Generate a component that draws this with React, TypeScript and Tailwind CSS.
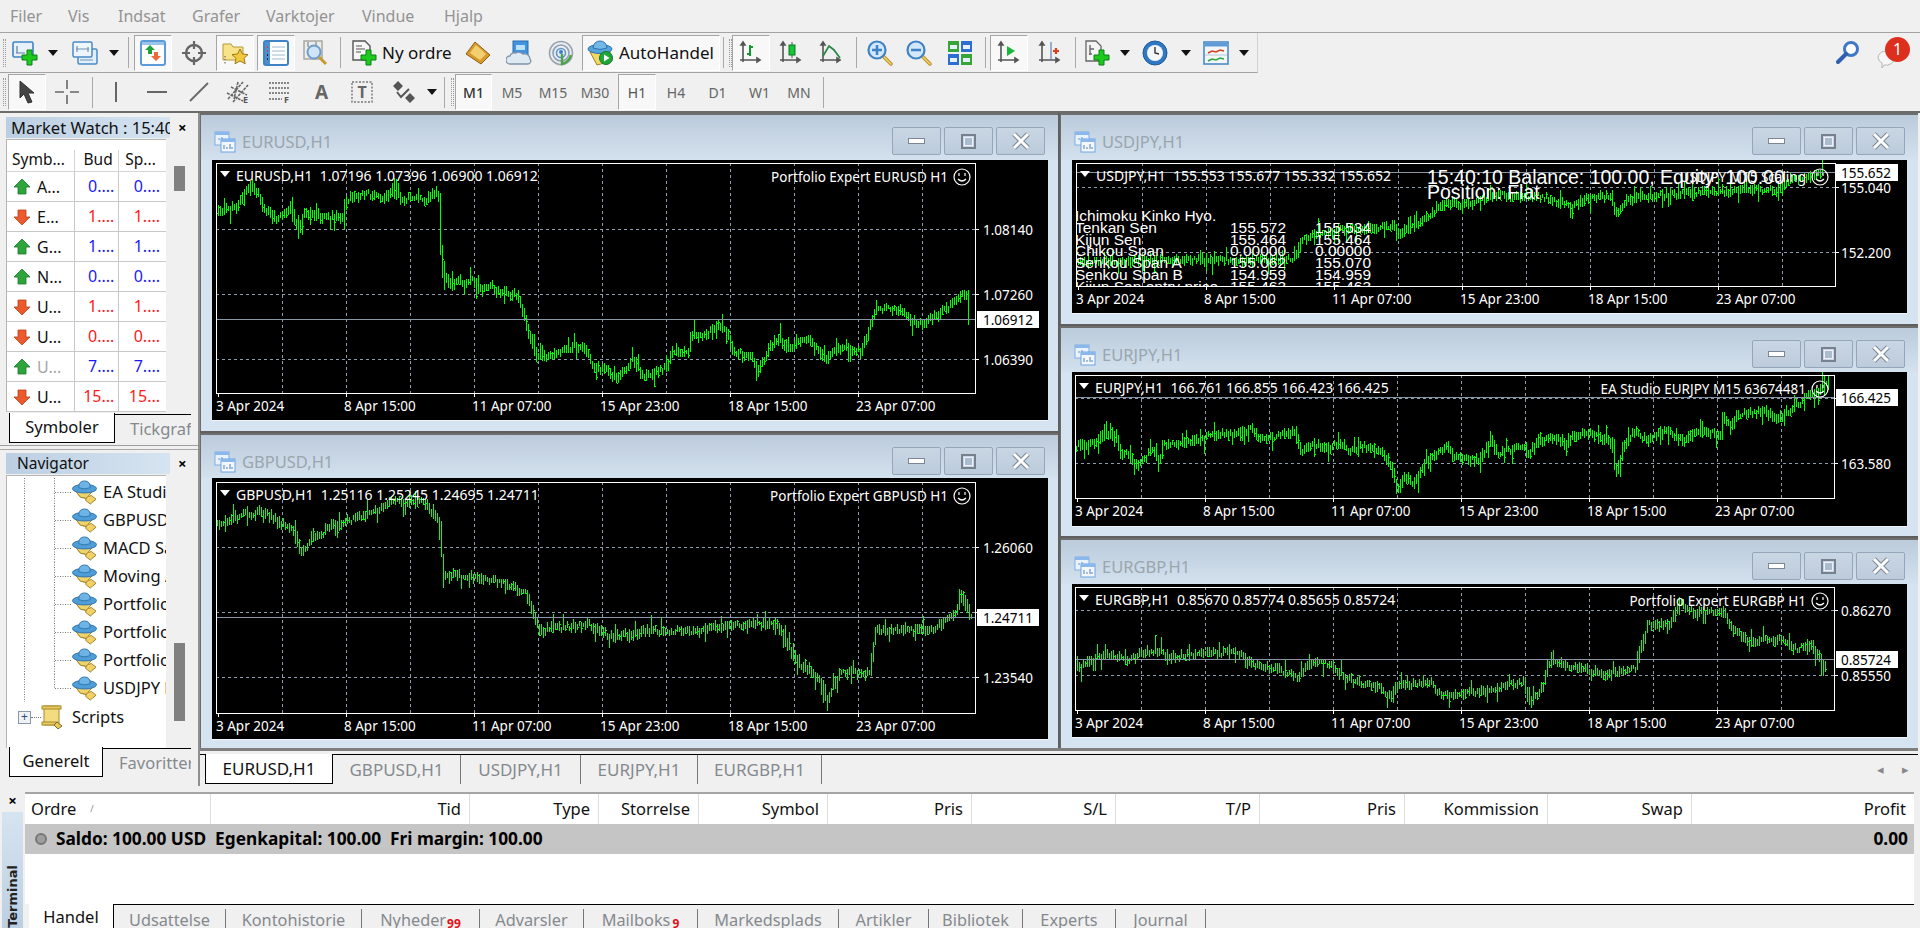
import React from "react";

type P = [number, number];
const conv = (a: number[], ox: number, oy: number, fx: number, fy: number): P[] => {
  const o: P[] = [];
  for (let i = 0; i < a.length; i += 2) o.push([ox + a[i] / fx, oy + a[i + 1] / fy]);
  return o;
};

function barsPath(pts: P[], seed: number) {
  let s = seed;
  const rnd = () => {
    s = (s * 1664525 + 1013904223) % 4294967296;
    return s / 4294967296;
  };
  const at = (x: number) => {
    for (let i = 1; i < pts.length; i++) {
      if (x <= pts[i][0]) {
        const [a, b] = pts[i - 1];
        const [c, d] = pts[i];
        if (c === a) return d;
        return b + ((d - b) * (x - a)) / (c - a);
      }
    }
    return pts[pts.length - 1][1];
  };
  let d = "";
  const end = pts[pts.length - 1][0];
  for (let x = pts[0][0]; x <= end; x += 2) {
    const y = at(x);
    const n = at(x + 2);
    const h = 4 + rnd() * 7;
    const w = (rnd() - 0.5) * 5;
    let top = Math.round(Math.min(y, n) - h / 2 + w);
    let bot = Math.round(Math.max(y, n) + h / 2 + w);
    const k = rnd();
    if (k < 0.07) bot += 8;
    else if (k < 0.14) top -= 8;
    const xi = Math.round(x);
    d += `M${xi + 0.5} ${top}V${bot}`;
    if (rnd() < 0.35) {
      const c = Math.round(top + (bot - top) * rnd());
      d += `M${xi + 1} ${c + 0.5}H${xi + 2}`;
    }
  }
  return d;
}

type ChartSpec = {
  title: string;
  ox: number;
  oy: number;
  w: number;
  h: number;
  pl: number;
  pt: number;
  pr: number;
  pb: number;
  grid: { y: number; label: string }[];
  cur: { y: number; label: string };
  trace: P[];
  legend: string;
  ea: string;
  seed: number;
  digitsLeft: boolean;
  extra?: boolean;
};

const times = ["3 Apr 2024", "8 Apr 15:00", "11 Apr 07:00", "15 Apr 23:00", "18 Apr 15:00", "23 Apr 07:00"];

function Chart({ c }: { c: ChartSpec }) {
  const X = (x: number) => x - c.ox;
  const Y = (y: number) => y - c.oy;
  const pl = X(c.pl), pr = X(c.pr), pt = Y(c.pt), pb = Y(c.pb);
  const vx: number[] = [];
  for (let i = 0; i < 11; i++) vx.push(pl + 65.5 + i * 64);
  const priceX = c.digitsLeft ? 982 : 1840;
  const boxX = c.digitsLeft ? 976 : 1835;
  const clipId = "clip" + c.seed;
  return (
    <svg width={c.w} height={c.h} className="block font-['Noto_Sans',sans-serif]">
      <rect width={c.w} height={c.h} fill="#000" />
      <clipPath id={clipId}>
        <rect x={pl} y={pt} width={pr - pl} height={pb - pt} />
      </clipPath>
      <g stroke="#8f9eae" strokeDasharray="3 3" shapeRendering="crispEdges">
        {vx.map((x) => (
          <line key={x} x1={x + 0.5} x2={x + 0.5} y1={pt} y2={pb} />
        ))}
        {c.grid.map((g) => (
          <line key={g.y} x1={pl} x2={pr} y1={Y(g.y) + 0.5} y2={Y(g.y) + 0.5} />
        ))}
      </g>
      <path d={barsPath(c.trace, c.seed)} transform={`translate(${-c.ox} ${-c.oy})`} stroke="#00ff00" strokeWidth={1} shapeRendering="crispEdges" fill="none" />
      <line x1={pl} x2={pr} y1={Y(c.cur.y) + 0.5} y2={Y(c.cur.y) + 0.5} stroke="#8795a5" shapeRendering="crispEdges" />
      <rect x={pl + 0.5} y={pt + 0.5} width={pr - pl} height={pb - pt} fill="none" stroke="#fff" shapeRendering="crispEdges" />
      <g stroke="#fff" shapeRendering="crispEdges">
        {c.grid.map((g) => (
          <line key={g.y} x1={pr} x2={pr + 4} y1={Y(g.y) + 0.5} y2={Y(g.y) + 0.5} />
        ))}
        {times.map((_, i) => (
          <line key={i} x1={pl + 2 + i * 128 + 0.5} x2={pl + 2 + i * 128 + 0.5} y1={pb} y2={pb + 4} />
        ))}
      </g>
      <polygon points={`${pl + 4},${pt + 8} ${pl + 14},${pt + 8} ${pl + 9},${pt + 14}`} fill="#fff" />
      <g fill="#fff" fontSize="13.5" dominantBaseline="central">
        <text x={pl + 20} y={pt + 12} fontSize="14" className="whitespace-pre" dominantBaseline="central">{c.legend}</text>
        <text x={X(c.digitsLeft ? 947 : 1805)} y={pt + 14} textAnchor="end" dominantBaseline="central">{c.ea}</text>
        {times.map((t, i) => (
          <text key={t} x={pl + i * 128} y={pb + 13} dominantBaseline="central">{t}</text>
        ))}
        {c.grid.filter((g) => g.label).map((g) => (
          <text key={g.y} x={X(priceX)} y={Y(g.y) + 1} dominantBaseline="central">{g.label}</text>
        ))}
      </g>
      <rect x={X(boxX)} y={Y(c.cur.y) - 8} width={62} height={17} fill="#fff" />
      <text x={X(priceX)} y={Y(c.cur.y) + 1} fontSize="13.5" fill="#000" dominantBaseline="central">{c.cur.label}</text>
      <g transform={`translate(${X(c.digitsLeft ? 961 : 1819)} ${pt + 14})`} fill="none" stroke="#fff" strokeWidth="1.2">
        <circle r="8" />
        <path d="M-4 2Q0 6 4 2" />
        <line x1="-3" x2="-3" y1="-4" y2="-1" />
        <line x1="3" x2="3" y1="-4" y2="-1" />
      </g>
      {c.extra && (
        <g fill="#fff" className="font-['Liberation_Sans',sans-serif]">
          <text x={X(1426)} y={Y(177)} fontSize="19.5" dominantBaseline="central">15:40:10 Balance: 100.00, Equity: 100.00</text>
          <text x={X(1426)} y={Y(192)} fontSize="19.5" dominantBaseline="central">Position: Flat</text>
          <g clipPath={`url(#${clipId})`} fontSize="15.5">
            {[
              ["Ichimoku Kinko Hyo.", "", "", 215],
              ["Tenkan Sen", "155.572", "155.534", 227],
              ["Kijun Sen", "155.464", "155.464", 239],
              ["Chikou Span", "0.00000", "0.00000", 250],
              ["Senkou Span A", "155.062", "155.070", 262],
              ["Senkou Span B", "154.959", "154.959", 274],
              ["Kijun Sen entry price", "155.463", "155.463", 286],
            ].map(([a, b, d, y]) => (
              <g key={a as string}>
                <text x={X(1074)} y={Y(y as number)} dominantBaseline="central">{a}</text>
                <text x={X(1285)} y={Y(y as number)} textAnchor="end" dominantBaseline="central">{b}</text>
                <text x={X(1370)} y={Y(y as number)} textAnchor="end" dominantBaseline="central">{d}</text>
              </g>
            ))}
          </g>
        </g>
      )}
    </svg>
  );
}

function TitleIcon() {
  return (
    <svg width="22" height="22" viewBox="0 0 22 22" className="shrink-0">
      <rect x="1" y="1" width="14" height="13" fill="#eaf2fb" stroke="#7fb0e6" />
      <rect x="1" y="1" width="14" height="3" fill="#8ab8ec" />
      <path d="M4 8h2M8 6v5M11 8v3" stroke="#6b93c4" />
      <rect x="7" y="8" width="14" height="13" fill="#f4f8fd" stroke="#6aa4e4" />
      <rect x="7" y="8" width="14" height="3" fill="#8ab8ec" />
      <path d="M10 14v4M13 16v2M16 13v5M18 16v2" stroke="#4e7fb8" />
    </svg>
  );
}

const wbtn = "w-[49px] h-[28px] rounded-[2px] border border-[#95a6b8] bg-[linear-gradient(#c9d6e4,#bccbdb)] flex items-center justify-center";

function ChartWindow({ c, cls, head }: { c: ChartSpec; cls: string; head: string }) {
  return (
    <div className={`${cls} flex flex-col border-t-2 border-l border-[#6d6d6d] bg-[#d6e4f1]`}>
      <div className={`${head} shrink-0 flex justify-between pl-[13px] pr-[13px] pt-[12px] bg-[linear-gradient(#bccbdb,#d3e1ee)]`}>
        <div className="flex items-center h-[28px] gap-[6px] mt-[1px]">
          <TitleIcon />
          <span className="text-[16.5px] text-[#9aa5ae]">{c.title}</span>
        </div>
        <div className="flex gap-[3px]">
          <div className={wbtn}>
            <div className="w-[17px] h-[6px] bg-white border border-[#7c8794]" />
          </div>
          <div className={wbtn}>
            <div className="w-[15px] h-[15px] border-[2px] border-[#77818d] bg-[#c9d6e4] flex items-center justify-center">
              <div className="w-[9px] h-[9px] border border-[#eef] bg-[#aabccd]" />
            </div>
          </div>
          <div className={wbtn}>
            <svg width="20" height="20" viewBox="0 0 20 20">
              <path d="M3 3l14 14M17 3L3 17" stroke="#7c8794" strokeWidth="5" />
              <path d="M3 3l14 14M17 3L3 17" stroke="#fff" strokeWidth="3" />
            </svg>
          </div>
        </div>
      </div>
      <div className="pl-[11px]">
        <div className="border-b border-[#eef4fa] w-fit">
          <Chart c={c} />
        </div>
      </div>
    </div>
  );
}

const eurusd: ChartSpec = {
  title: "EURUSD,H1", ox: 211, oy: 160, w: 836, h: 260, pl: 215, pt: 163, pr: 974, pb: 393,
  grid: [{ y: 229, label: "1.08140" }, { y: 294, label: "1.07260" }, { y: 359, label: "1.06390" }],
  cur: { y: 319, label: "1.06912" },
  trace: conv([37,280,78,260,100,195,120,230,125,270,150,295,175,265,190,340,200,275,230,290,270,290,275,240,310,220,350,235,365,190,375,235,420,240,445,212,448,370,455,470,465,500,480,485,510,480,520,510,540,490,550,515,590,525,600,590,612,650,625,715,650,705,690,680,710,680,725,740,750,750,770,780,800,715,815,770,840,760,860,740,870,700,900,700,905,640,930,650,950,615,972,640,980,690,1020,720,1025,760,1045,690,1065,650,1080,690,1110,660,1130,670,1150,720,1170,685,1210,690,1215,700,1240,570,1285,565,1305,605,1325,610,1350,590,1385,550,1395,520,1410,520,1411,600], 195, 120, 1.823, 3),
  legend: "EURUSD,H1  1.07196 1.07396 1.06900 1.06912", ea: "Portfolio Expert EURUSD H1", seed: 11, digitsLeft: true,
};
const gbpusd: ChartSpec = {
  title: "GBPUSD,H1", ox: 211, oy: 478, w: 836, h: 261, pl: 215, pt: 482, pr: 974, pb: 713,
  grid: [{ y: 547, label: "1.26060" }, { y: 612, label: "" }, { y: 677, label: "1.23540" }],
  cur: { y: 617, label: "1.24711" },
  trace: conv([176,428,200,420,215,418,240,435,245,450,270,430,300,420,320,410,345,410,358,425,362,470,380,470,410,475,430,485,440,515,480,510,500,520,530,515,570,515,600,510,635,510,650,540,670,555,675,572,685,550,710,550,715,515,760,515,780,500,785,485,792,503], 0, 0, 1 / 1.2245, 1 / 1.2245),
  legend: "GBPUSD,H1  1.25116 1.25245 1.24695 1.24711", ea: "Portfolio Expert GBPUSD H1", seed: 23, digitsLeft: true,
};
const usdjpy: ChartSpec = {
  title: "USDJPY,H1", ox: 1071, oy: 160, w: 835, h: 153, pl: 1075, pt: 163, pr: 1834, pb: 286,
  grid: [{ y: 187, label: "155.040" }, { y: 252, label: "152.200" }],
  cur: { y: 172, label: "155.652" },
  trace: conv([27,430,100,425,200,420,300,420,430,418,438,360,470,340,540,325,610,320,615,350,660,300,700,250,740,255,790,225,880,230,930,260,970,230,1005,230,1013,290,1030,240,1100,225,1200,215,1310,210,1330,180,1390,155], 1060, 120, 1.823, 3),
  legend: "USDJPY,H1  155.553 155.677 155.332 155.652", ea: "USDJPY M15 Scaling", seed: 37, digitsLeft: false, extra: true,
};
const eurjpy: ChartSpec = {
  title: "EURJPY,H1", ox: 1071, oy: 372, w: 835, h: 154, pl: 1074, pt: 375, pr: 1833, pb: 498,
  grid: [{ y: 398, label: "" }, { y: 463, label: "163.580" }],
  cur: { y: 397, label: "166.425" },
  trace: conv([36,380,75,365,85,345,110,350,118,395,135,405,145,435,165,410,175,390,190,425,195,375,230,372,270,360,275,348,320,340,358,325,368,355,400,350,435,335,445,400,470,370,490,390,515,365,535,395,560,378,590,390,610,440,622,520,630,470,650,490,670,430,690,400,710,375,725,415,770,420,790,360,800,400,850,380,855,405,880,360,900,355,930,370,940,345,965,340,1010,365,1017,470,1030,380,1050,335,1070,360,1110,330,1140,370,1160,335,1200,340,1207,350,1210,290,1225,325,1235,285,1280,275,1310,295,1335,265,1360,235,1400,195], 1055, 320, 1.8127, 3),
  legend: "EURJPY,H1  166.761 166.855 166.423 166.425", ea: "EA Studio EURJPY M15 63674481", seed: 41, digitsLeft: false,
};
const eurgbp: ChartSpec = {
  title: "EURGBP,H1", ox: 1071, oy: 584, w: 835, h: 153, pl: 1074, pt: 587, pr: 1833, pb: 710,
  grid: [{ y: 610, label: "0.86270" }, { y: 675, label: "0.85550" }],
  cur: { y: 659, label: "0.85724" },
  trace: conv([38,1050,60,1030,80,1010,100,1005,130,1020,160,1000,185,990,210,1010,250,1005,300,1000,340,998,348,1030,400,1045,440,1075,460,1035,490,1030,520,1060,540,1085,590,1105,605,1135,620,1100,680,1085,700,1125,770,1115,850,1085,860,1150,885,1100,895,1025,950,1045,1000,1065,1055,1045,1060,995,1075,915,1115,915,1130,850,1165,880,1210,870,1225,920,1250,960,1320,960,1345,990,1370,970,1385,1010,1395,1035], 1055, 320, 1.8127, 3),
  legend: "EURGBP,H1  0.85670 0.85774 0.85655 0.85724", ea: "Portfolio Expert EURGBP H1", seed: 53, digitsLeft: false,
};

/* ---------- icons ---------- */
const Plus = ({ x = 0, y = 0 }: { x?: number; y?: number }) => (
  <path transform={`translate(${x} ${y})`} d="M5 0h5v5h5v5h-5v5H5v-5H0V5h5z" fill="#1ec91e" stroke="#0b7f16" />
);
const Axes = ({ c = "#555" }: { c?: string }) => (
  <path d="M5 2v20M2 20h20M5 2l-2 3h4zM22 20l-3-2v4z" stroke={c} strokeWidth="1.6" fill={c} />
);
const I = ({ s = 26, children }: { s?: number; children: React.ReactNode }) => (
  <svg width={s} height={s} viewBox="0 0 26 26" className="shrink-0">{children}</svg>
);
const Arrow = () => (
  <svg width="10" height="6" viewBox="0 0 10 6"><polygon points="0,0 10,0 5,6" fill="#111" /></svg>
);
const NewChart = () => (
  <I>
    <rect x="1" y="2" width="20" height="15" rx="1.5" fill="#e8f1fa" stroke="#3f83c6" strokeWidth="1.6" />
    <path d="M5 6v7M4 13h9" stroke="#5a7fa3" strokeWidth="1.2" />
    <Plus x={10} y={10} />
  </I>
);
const Profiles = () => (
  <I>
    <rect x="6" y="9" width="19" height="15" rx="1.5" fill="#e2eef9" stroke="#4a8bc9" strokeWidth="1.5" />
    <rect x="1" y="2" width="19" height="15" rx="1.5" fill="#eef5fb" stroke="#4a8bc9" strokeWidth="1.5" />
    <path d="M4 9h13M5 6v6M16 7v5M8 20h13" stroke="#6f93b5" strokeWidth="1.2" />
  </I>
);
const MarketW = () => (
  <I>
    <rect x="1" y="1" width="24" height="24" rx="2" fill="#fff" stroke="#5d9bd8" strokeWidth="2" />
    <rect x="2" y="2" width="22" height="3" fill="#9cc4ea" />
    <path d="M10 5l5 5h-3v4H8v-4H5z" fill="#1fa23a" />
    <path d="M16 21l-5-5h3v-4h4v4h3z" fill="#ee6a3a" />
  </I>
);
const Target = () => (
  <I>
    <circle cx="13" cy="13" r="8" fill="none" stroke="#666" strokeWidth="2.4" />
    <path d="M13 1v8M13 17v8M1 13h8M17 13h8" stroke="#666" strokeWidth="2.2" />
  </I>
);
const FolderStar = () => (
  <I>
    <path d="M1 4h8l2 3h10v13H1z" fill="#f8e28a" stroke="#b39a3c" />
    <path d="M3 22v2M3 16v4" stroke="#555" strokeDasharray="1.5 1.5" />
    <path d="M18 9l2.5 5 5.5.6-4 3.7 1.2 5.5-5.2-2.8-5 2.8 1-5.5-4-3.7 5.6-.6z" fill="#f2c93d" stroke="#9a7a1c" />
  </I>
);
const Term = () => (
  <I>
    <rect x="1" y="1" width="24" height="24" rx="2" fill="#fff" stroke="#3f83c6" strokeWidth="2" />
    <rect x="2" y="2" width="5" height="22" fill="#4e8fd0" />
    <path d="M9 7h13M9 11h13M9 15h13M9 19h13" stroke="#9db8d4" />
    <path d="M4 7h1M4 11h1" stroke="#e33" strokeWidth="2" />
    <path d="M4 15h1M4 19h1" stroke="#222" strokeWidth="2" />
  </I>
);
const Tester = () => (
  <I>
    <rect x="1" y="1" width="18" height="18" fill="#ececec" stroke="#a8a8a0" strokeWidth="1.5" />
    <path d="M5 2v5M13 2v5" stroke="#7f8fa0" strokeWidth="1.3" />
    <circle cx="11" cy="12" r="6.5" fill="#cfe4f8" stroke="#6f9cc9" strokeWidth="2" />
    <path d="M16 17l7 7" stroke="#c89b30" strokeWidth="3" />
  </I>
);
const NewOrder = () => (
  <I>
    <path d="M2 1h12l5 5v14H2z" fill="#f6f6f6" stroke="#555" strokeWidth="1.4" />
    <path d="M5 6h6M5 9h9M5 12h5" stroke="#555" strokeWidth="1.2" />
    <Plus x={10} y={10} />
  </I>
);
const Book = () => (
  <I>
    <path d="M1 14L10 2l15 13-9 9z" fill="#d99a2c" stroke="#8a5f14" />
    <path d="M5 13l6-8 10 9-6 6z" fill="#f4cf72" />
  </I>
);
const Cloud = () => (
  <I>
    <rect x="7" y="1" width="15" height="15" fill="#3f93df" stroke="#2a6dae" />
    <rect x="10" y="5" width="9" height="5" fill="#bde0fa" />
    <path d="M4 24a4 4 0 010-8q1-4 6-3 3-2 7 1 6-1 7 5a3 3 0 01-2 5z" fill="#dfe9f2" stroke="#7f93a8" strokeWidth="1.3" />
  </I>
);
const Radar = () => (
  <I>
    <circle cx="13" cy="13" r="11.5" fill="#e9edf1" stroke="#9aa4ad" strokeWidth="1.6" />
    <circle cx="13" cy="13" r="8" fill="none" stroke="#8fa0b0" strokeWidth="1.6" />
    <circle cx="13" cy="13" r="4.5" fill="none" stroke="#5d95cb" strokeWidth="1.6" />
    <circle cx="13" cy="12" r="2" fill="#3c7fbd" />
    <path d="M14 14v10q7-2 9-9" fill="none" stroke="#4ba248" strokeWidth="2.4" />
  </I>
);
const Hat = ({ s = 26 }: { s?: number }) => (
  <I s={s}>
    <path d="M4 12l5 6 6 1-1 2 5 4 6-5-5-4-2 1z" fill="#f2d266" stroke="#9d8126" />
    <path d="M4 12h17l-6 7-6-1z" fill="#f0d36b" stroke="#9d8126" />
    <ellipse cx="13" cy="9" rx="12.5" ry="4.5" fill="#4f9ed8" stroke="#2f72ad" />
    <path d="M7 8q0-7 6-7t6 7q-6 2.5-12 0z" fill="#6eb5e6" stroke="#2f72ad" />
  </I>
);
const Auto = () => (
  <I>
    <path d="M3 12L10 25l15-4-2-9z" fill="#f3d868" stroke="#9d8126" />
    <ellipse cx="13" cy="9" rx="12" ry="4.5" fill="#56a4dc" stroke="#2f72ad" />
    <path d="M6 8q1-7 7-7t7 7q-7 3-14 0z" fill="#74b8e8" stroke="#2f72ad" />
    <circle cx="19" cy="18" r="6.5" fill="#1fa83a" stroke="#0e7a26" />
    <polygon points="17,14.5 17,21.5 22.5,18" fill="#fff" />
  </I>
);
const BarI = () => (<I><Axes /><path d="M12 5v11M12 7h3M12 14H9" stroke="#119a2a" strokeWidth="2" fill="none" /></I>);
const Candle = () => (<I><Axes /><path d="M14 2v16" stroke="#555" /><rect x="11" y="5" width="6" height="10" fill="#14c43a" stroke="#0a7a20" /></I>);
const LineI = () => (<I><Axes /><path d="M5 16l6-10 5 4 6 8" fill="none" stroke="#2a8a4a" strokeWidth="1.8" /></I>);
const Zoom = ({ plus }: { plus: boolean }) => (
  <I>
    <path d="M16 16l8 8" stroke="#b98f25" strokeWidth="3.5" strokeLinecap="round" />
    <path d="M16 16l8 8" stroke="#f0d36b" strokeWidth="1.6" strokeLinecap="round" />
    <circle cx="10" cy="10" r="8.5" fill="#d3e8fa" stroke="#3f83c6" strokeWidth="2.2" />
    <path d={plus ? "M5 10h10M10 5v10" : "M5 10h10"} stroke="#3f83c6" strokeWidth="2.5" />
  </I>
);
const Tile = () => (
  <I>
    <rect x="1" y="1" width="11" height="11" fill="#37a53a" />
    <rect x="14" y="1" width="11" height="11" fill="#2d6fd0" />
    <rect x="1" y="14" width="11" height="11" fill="#2d6fd0" />
    <rect x="14" y="14" width="11" height="11" fill="#37a53a" />
    <path d="M3 5h7v4H3zM16 5h7v4h-7zM3 18h7v4H3zM16 18h7v4h-7z" fill="#e6f1fb" />
  </I>
);
const Scroll = () => (<I><Axes /><polygon points="11,6 11,16 19,11" fill="#18b83a" /></I>);
const Shift = () => (<I><Axes /><path d="M14 2v17" stroke="#3f6fa8" /><path d="M16 11h6M19 8v6" stroke="#e23c1a" strokeWidth="2.2" /></I>);
const Indic = () => (
  <I>
    <path d="M2 1h10l5 5v15H2z" fill="#f4f4f4" stroke="#666" strokeWidth="1.3" />
    <path d="M6 5v10M6 9h4M5 14h3" stroke="#666" strokeWidth="1.4" />
    <Plus x={10} y={10} />
  </I>
);
const Clock = () => (
  <I>
    <circle cx="13" cy="13" r="12" fill="#2f78c4" stroke="#1e5a99" />
    <circle cx="13" cy="13" r="8" fill="#f4f7fa" />
    <path d="M13 7v6l4 1" fill="none" stroke="#333" strokeWidth="1.4" />
  </I>
);
const Templ = () => (
  <I>
    <rect x="1" y="2" width="24" height="22" fill="#f3f6f9" stroke="#4a8bc9" strokeWidth="1.6" />
    <rect x="2" y="3" width="22" height="3.5" fill="#5f9bd6" />
    <path d="M5 13l4-2 4 1 4-2 4 1" fill="none" stroke="#d4401c" strokeWidth="1.5" />
    <path d="M5 21l4-2 4 1 4-2 4 1" fill="none" stroke="#2da63f" strokeWidth="1.5" />
    <path d="M2 15h22" stroke="#b9c7d6" />
  </I>
);
const Cursor = () => (
  <svg width="18" height="24" viewBox="0 0 18 24"><path d="M2 1l14 12h-6l4 9-4 1-4-9-4 4z" fill="#444" stroke="#333" /></svg>
);
const Cross = () => (
  <I><path d="M13 1v9M13 16v9M1 13h9M16 13h9" stroke="#666" strokeWidth="1.6" /></I>
);
const Channel = () => (
  <I>
    <path d="M2 20L17 3M7 23L22 6M1 14l16 8M5 8l16 8M12 3l-4 17" stroke="#666" strokeWidth="1.6" fill="none" strokeDasharray="3 1" />
    <text x="17" y="24" fontSize="9" fontWeight="700" fill="#555">E</text>
  </I>
);
const Fibo = () => (
  <I>
    <path d="M1 4h21M1 9h21M1 14h21M1 20h13" stroke="#666" strokeWidth="1.6" strokeDasharray="2 1" />
    <text x="16" y="24" fontSize="9" fontWeight="700" fill="#555">F</text>
  </I>
);
const TextBox = () => (
  <I>
    <rect x="3" y="3" width="20" height="20" fill="none" stroke="#777" strokeWidth="1.4" strokeDasharray="2 1.5" />
    <text x="13" y="19" textAnchor="middle" fontSize="16" fontWeight="700" fill="#666">T</text>
  </I>
);
const Arrows = () => (
  <I>
    <path d="M7 2l5 5-5 5-5-5zM19 14l5 5-5 5-5-5z" fill="#555" />
    <path d="M6 13l4 5 8-8" fill="none" stroke="#555" strokeWidth="2" />
  </I>
);

const Sep = ({ c }: { c: string }) => (
  <div className={`${c} h-full flex items-center justify-center shrink-0`}><div className="w-px h-[31px] bg-[#a9a9a9]" /></div>
);
const Grip = ({ c }: { c: string }) => (
  <div className={`${c} h-full flex items-center pl-[3px] shrink-0`}>
    <div className="w-[3px] h-[28px] border-l border-r border-dotted border-[#9a9a9a]" />
  </div>
);
const S = ({ c, children }: { c: string; children: React.ReactNode }) => (
  <div className={`${c} h-full shrink-0 flex items-center justify-center`}>{children}</div>
);
const press = "h-[36px] shrink-0 flex items-center justify-center border border-t-[#a5a5a5] border-l-[#a5a5a5] border-r-white border-b-white bg-[#f8f8f8]";

const rows: [boolean, string, string, string][] = [
  [true, "A...", "0....", "0...."],
  [false, "E...", "1....", "1...."],
  [true, "G...", "1....", "1...."],
  [true, "N...", "0....", "0...."],
  [false, "U...", "1....", "1...."],
  [false, "U...", "0....", "0...."],
  [true, "U...", "7....", "7...."],
  [false, "U...", "15...", "15..."],
];

const TreeLine = ({ last }: { last?: boolean }) => (
  <svg width="65" height="28" className="shrink-0">
    <path d={`M17.5 0V28M47.5 0V${last ? 14 : 28}M48 14.5H65`} stroke="#777" strokeDasharray="1 1.5" fill="none" />
  </svg>
);

const Panel = ({ title, c, pad, size }: { title: string; c: string; pad: string; size: string }) => (
  <div className={`${c} flex items-center pl-[6px]`}>
    <div className={`w-[164px] h-[21px] bg-[linear-gradient(90deg,#bccfe2,#d6e4f1)] ${pad} ${size} leading-[21px] text-[#111] overflow-hidden whitespace-nowrap`}>
      {title}
    </div>
    <span className="ml-[8px] text-[15px] font-bold text-black leading-none">×</span>
  </div>
);

const Tab = ({ label, active, c }: { label: string; active?: boolean; c: string }) => (
  <div className={`${c} flex items-center justify-center text-[17px] ${active ? "bg-white text-[#111] border-l border-r border-b border-black -mt-px" : "text-[#85898e]"}`}>
    {label}
  </div>
);

const terminalCols: [string, string, string][] = [
  ["w-[186px]", "Ordre", "text-left"],
  ["w-[259px]", "Tid", ""],
  ["w-[129px]", "Type", ""],
  ["w-[100px]", "Storrelse", ""],
  ["w-[129px]", "Symbol", ""],
  ["w-[144px]", "Pris", ""],
  ["w-[144px]", "S/L", ""],
  ["w-[144px]", "T/P", ""],
  ["w-[145px]", "Pris", ""],
  ["w-[143px]", "Kommission", ""],
  ["w-[144px]", "Swap", ""],
  ["flex-1", "Profit", ""],
];

const TT = ({ c, children }: { c: string; children: React.ReactNode }) => (
  <div className={`${c} h-[24px] shrink-0 flex items-start justify-center text-[16.3px] leading-[22px] text-[#85898e] border-r border-[#777] mt-[4px]`}>{children}</div>
);

export default function App() {
  return (
    <div className="w-[1920px] h-[928px] overflow-hidden bg-[#f0f0f0] flex flex-col font-['Noto_Sans',sans-serif] text-[#111]">
      {/* menu */}
      <div className="h-[32px] shrink-0 flex items-center text-[16px] text-[#939393]">
        <span className="ml-[10px] w-[58px]">Filer</span>
        <span className="w-[50px]">Vis</span>
        <span className="w-[74px]">Indsat</span>
        <span className="w-[74px]">Grafer</span>
        <span className="w-[96px]">Varktojer</span>
        <span className="w-[82px]">Vindue</span>
        <span>Hjalp</span>
      </div>
      {/* toolbar 1 */}
      <div className="h-[41px] shrink-0 flex border-t border-[#a3a3a3]">
        <div className="w-[1258px] h-full flex items-center border-b border-[#a3a3a3] border-r border-r-[#d0d0d0]">
          <Grip c="w-[8px]" />
          <S c="w-[34px]"><NewChart /></S>
          <S c="w-[22px]"><Arrow /></S>
          <S c="w-[42px]"><Profiles /></S>
          <S c="w-[16px]"><Arrow /></S>
          <Sep c="w-[12px]" />
          <div className={`${press} w-[38px]`}><MarketW /></div>
          <S c="w-[44px]"><Target /></S>
          <div className={`${press} w-[38px]`}><FolderStar /></div>
          <div className="w-[3px] shrink-0" />
          <div className={`${press} w-[38px]`}><Term /></div>
          <S c="w-[41px]"><Tester /></S>
          <Sep c="w-[8px]" />
          <div className="w-[114px] h-full shrink-0 flex items-center gap-[5px] pl-[7px]">
            <NewOrder />
            <span className="text-[17px] whitespace-nowrap text-[#111]">Ny ordre</span>
          </div>
          <S c="w-[40px]"><Book /></S>
          <S c="w-[42px]"><Cloud /></S>
          <S c="w-[42px]"><Radar /></S>
          <div className={`${press} w-[138px] !justify-start gap-[6px] pl-[4px]`}>
            <Auto />
            <span className="text-[17px] text-[#111]">AutoHandel</span>
          </div>
          <Sep c="w-[6px]" />
          <Grip c="w-[6px]" />
          <div className={`${press} w-[38px]`}><BarI /></div>
          <S c="w-[41px]"><Candle /></S>
          <S c="w-[40px]"><LineI /></S>
          <Sep c="w-[10px]" />
          <S c="w-[38px]"><Zoom plus /></S>
          <S c="w-[40px]"><Zoom plus={false} /></S>
          <S c="w-[42px]"><Tile /></S>
          <Sep c="w-[9px]" />
          <div className={`${press} w-[38px]`}><Scroll /></div>
          <S c="w-[43px]"><Shift /></S>
          <Sep c="w-[9px]" />
          <S c="w-[34px]"><Indic /></S>
          <S c="w-[21px]"><Arrow /></S>
          <S c="w-[40px]"><Clock /></S>
          <S c="w-[21px]"><Arrow /></S>
          <S c="w-[40px]"><Templ /></S>
          <S c="w-[16px]"><Arrow /></S>
        </div>
        <div className="flex-1 flex items-center justify-end pr-[10px] pb-[2px]">
          <svg width="24" height="24" viewBox="0 0 24 24" className="mr-[16px]">
            <circle cx="15" cy="9" r="6.5" fill="#fff" stroke="#3f78c6" strokeWidth="3" />
            <path d="M10 14l-8 8" stroke="#2f5fb0" strokeWidth="4" strokeLinecap="round" />
          </svg>
          <div className="relative w-[34px] h-[30px]">
            <svg width="20" height="20" viewBox="0 0 20 20" className="absolute left-0 top-[12px]">
              <path d="M2 9a8 7 0 1116 0 8 7 0 01-10 7l-2 3v-5a7 7 0 01-4-5z" fill="#f6f6f6" stroke="#b5b5b5" />
            </svg>
            <div className="absolute left-[9px] top-0 w-[25px] h-[25px] rounded-full bg-[#dc2f1e] text-white text-[16px] leading-[25px] text-center">1</div>
          </div>
        </div>
      </div>
      {/* toolbar 2 */}
      <div className="h-[40px] shrink-0 flex items-center border-b-2 border-[#6b6b6b]">
        <Grip c="w-[8px]" />
        <div className={`${press} w-[38px]`}><Cursor /></div>
        <S c="w-[42px]"><Cross /></S>
        <Sep c="w-[9px]" />
        <S c="w-[38px]"><div className="w-[2px] h-[20px] bg-[#666]" /></S>
        <S c="w-[44px]"><div className="w-[20px] h-[2px] bg-[#666]" /></S>
        <S c="w-[40px]"><svg width="20" height="20"><path d="M1 19L19 1" stroke="#666" strokeWidth="1.8" /></svg></S>
        <S c="w-[39px]"><Channel /></S>
        <S c="w-[45px]"><Fibo /></S>
        <S c="w-[37px]"><span className="text-[19px] font-bold text-[#666] leading-none">A</span></S>
        <S c="w-[43px]"><TextBox /></S>
        <S c="w-[41px]"><Arrows /></S>
        <S c="w-[16px]"><Arrow /></S>
        <Sep c="w-[8px]" />
        <Grip c="w-[7px]" />
        <div className={`${press} w-[37px] text-[14px] font-medium text-[#333]`}>M1</div>
        <S c="w-[40px]"><span className="text-[14px] text-[#666]">M5</span></S>
        <S c="w-[42px]"><span className="text-[14px] text-[#666]">M15</span></S>
        <S c="w-[42px]"><span className="text-[14px] text-[#666]">M30</span></S>
        <div className="w-[2px] shrink-0" />
        <div className={`${press} w-[38px] text-[14px] text-[#555]`}>H1</div>
        <S c="w-[40px]"><span className="text-[14px] text-[#666]">H4</span></S>
        <S c="w-[43px]"><span className="text-[14px] text-[#666]">D1</span></S>
        <S c="w-[41px]"><span className="text-[14px] text-[#666]">W1</span></S>
        <S c="w-[38px]"><span className="text-[14px] text-[#666]">MN</span></S>
        <Sep c="w-[10px]" />
      </div>
      {/* main */}
      <div className="h-[673px] shrink-0 flex">
        {/* sidebar */}
        <div className="w-[200px] shrink-0 flex flex-col border-r-[2px] border-[#8f8f8f]">
          <div className="h-[333px] shrink-0 flex flex-col border-b border-[#a0a0a0] pt-[4px]">
            <Panel title="Market Watch : 15:40" c="h-[21px]" pad="pl-[5px]" size="text-[16.5px]" />
            <div className="flex mt-[1px]">
              <div className="w-[160px] ml-[6px] bg-white border-l border-t border-[#b5b5b5] pt-[10px]">
                <div className="flex h-[22px] text-[15.5px] leading-[18px] border-b border-[#d5d5d5]">
                  <div className="w-[68px] pl-[5px] border-r border-[#d5d5d5]">Symb...</div>
                  <div className="w-[45px] pl-[9px] border-r border-[#d5d5d5]">Bud</div>
                  <div className="w-[47px] pl-[6px]">Sp...</div>
                </div>
                {rows.map((r, i) => (
                  <div key={i} className="flex h-[30px] border-b border-[#c8c8c8] text-[16px] leading-[28px]">
                    <div className="w-[68px] flex items-center gap-[6px] pl-[6px] border-r border-[#c8c8c8]">
                      <svg width="18" height="18" viewBox="0 0 18 18" className="shrink-0">
                        {r[0] ? (
                          <path d="M9 1l8 8h-4v7H5V9H1z" fill="#2ea43c" stroke="#1a7a2a" strokeWidth=".8" />
                        ) : (
                          <path d="M9 17l8-8h-4V2H5v7H1z" fill="#ea5a2c" stroke="#b93e18" strokeWidth=".8" />
                        )}
                      </svg>
                      <span className={i === 6 ? "text-[#a6a6a6]" : "text-[#111]"}>{r[1]}</span>
                    </div>
                    <div className={`w-[45px] pr-[4px] text-right border-r border-[#c8c8c8] ${r[0] ? "text-[#1a1aff]" : "text-[#ff1a1a]"}`}>{r[2]}</div>
                    <div className={`w-[47px] pr-[6px] text-right ${r[0] ? "text-[#1a1aff]" : "text-[#ff1a1a]"}`}>{r[3]}</div>
                  </div>
                ))}
              </div>
              <div className="pl-[8px] pt-[27px]">
                <div className="w-[11px] h-[25px] bg-[#808080]" />
              </div>
            </div>
            <div className="flex h-[30px] mt-[2px] pl-[9px]">
              <div className="w-[106px] h-[30px] -mt-px bg-white border-x border-b border-black text-[16.5px] text-[#111] flex items-center justify-center">Symboler</div>
              <div className="w-[76px] h-[29px] border-t border-black text-[16.5px] text-[#85898e] pl-[15px] overflow-hidden whitespace-nowrap leading-[28px]">Tickgraf</div>
            </div>
          </div>
          <div className="h-[4px] bg-[#f0f0f0] border-b border-[#a8a8a8]" />
          <div className="flex-1 flex flex-col pt-[3px]">
            <Panel title="Navigator" c="h-[21px]" pad="pl-[11px]" size="text-[15.5px]" />
            <div className="flex mt-[1px] h-[273px]">
              <div className="w-[160px] ml-[6px] bg-white border-l border-t border-[#b5b5b5] overflow-hidden text-[16.5px] pt-[2px]">
                {["EA Studio", "GBPUSD H1", "MACD Sample", "Moving Average", "Portfolio Expert", "Portfolio Expert", "Portfolio Expert", "USDJPY M15"].map((t, i) => (
                  <div key={i} className="h-[28px] flex items-center whitespace-nowrap">
                    <TreeLine last={i === 7} />
                    <Hat s={25} />
                    <span className="ml-[6px]">{t}</span>
                  </div>
                ))}
                <div className="h-[30px] flex items-center whitespace-nowrap">
                  <div className="ml-[11px] w-[13px] h-[13px] border border-[#8a97a8] bg-[#eef2f7] flex items-center justify-center text-[12px] leading-none text-[#2c4a78] shrink-0">+</div>
                  <div className="w-[10px] border-t border-dotted border-[#777] shrink-0" />
                  <svg width="22" height="24" viewBox="0 0 22 24" className="shrink-0">
                    <rect x="3" y="1" width="15" height="19" fill="#f3dc7f" stroke="#a88a2a" />
                    <rect x="1" y="1" width="19" height="3" fill="#e8c95c" stroke="#a88a2a" />
                    <rect x="1" y="17" width="15" height="3" fill="#e8c95c" stroke="#a88a2a" />
                    <path d="M16 17l5 4-4 3-4-4z" fill="#e8c95c" stroke="#7a6a2a" />
                  </svg>
                  <span className="ml-[9px]">Scripts</span>
                </div>
              </div>
              <div className="pl-[8px] pt-[168px]">
                <div className="w-[11px] h-[78px] bg-[#808080]" />
              </div>
            </div>
            <div className="flex h-[30px] pl-[9px]">
              <div className="w-[94px] h-[30px] -mt-px bg-white border-x border-b border-black text-[16.5px] text-[#111] flex items-center justify-center">Generelt</div>
              <div className="w-[88px] h-[29px] border-t border-black text-[16.5px] text-[#85898e] pl-[16px] overflow-hidden whitespace-nowrap leading-[28px]">Favoritter</div>
            </div>
          </div>
        </div>
        {/* chart area */}
        <div className="w-[1718px] flex flex-col">
          <div className="h-[638px] shrink-0 flex gap-[2px] bg-[#5f5f5f] border-b-[3px] border-[#7f7f7f]">
            <div className="w-[858px] flex flex-col gap-[2px]">
              <ChartWindow c={eurusd} cls="h-[318px]" head="h-[45px]" />
              <ChartWindow c={gbpusd} cls="flex-1" head="h-[43px]" />
            </div>
            <div className="flex-1 flex flex-col gap-[2px]">
              <ChartWindow c={usdjpy} cls="h-[211px]" head="h-[45px]" />
              <ChartWindow c={eurjpy} cls="h-[210px]" head="h-[44px]" />
              <ChartWindow c={eurgbp} cls="flex-1" head="h-[44px]" />
            </div>
          </div>
          <div className="h-[3px] shrink-0" />
          <div className="h-[30px] shrink-0 flex border-t border-black pl-[5px] w-[1718px]">
            <Tab label="EURUSD,H1" active c="w-[128px] h-[30px]" />
            <Tab label="GBPUSD,H1" c="w-[128px] h-[29px] border-r border-[#777]" />
            <Tab label="USDJPY,H1" c="w-[120px] h-[29px] border-r border-[#777]" />
            <Tab label="EURJPY,H1" c="w-[117px] h-[29px] border-r border-[#777]" />
            <Tab label="EURGBP,H1" c="w-[124px] h-[29px] border-r border-[#777]" />
            <div className="ml-auto mr-[9px] flex items-center gap-[18px] text-[13px] text-[#888]">
              <span>◂</span>
              <span>▸</span>
            </div>
          </div>
        </div>
      </div>
      {/* terminal */}
      <div className="flex-1 flex min-h-0 overflow-hidden">
        <div className="w-[25px] shrink-0 flex flex-col items-center pt-[7px]">
          <span className="text-[15px] font-bold leading-none text-black">×</span>
          <div className="mt-[4px] flex-1 w-[21px] bg-[linear-gradient(#d6e4f1,#bccfe2)] flex flex-col justify-end overflow-hidden">
            <span className="[writing-mode:vertical-rl] rotate-180 font-['DejaVu_Sans',sans-serif] font-bold text-[13px] leading-[21px] text-[#222]">Terminal</span>
          </div>
        </div>
        <div className="w-[1889px] flex flex-col mt-[6px] bg-white border-t-2 border-[#a5a5a5]">
          <div className="h-[30px] shrink-0 flex text-[16.5px] text-[#111] leading-[30px]">
            {terminalCols.map(([w, t, a], i) => (
              <div key={i} className={`${w} shrink-0 ${i < 11 ? "border-r border-[#dedede]" : ""} ${a === "text-left" ? "pl-[6px]" : "text-right pr-[8px]"}`}>
                {t}
                {i === 0 && <span className="ml-[14px] text-[9px] text-[#888] align-top">/</span>}
              </div>
            ))}
          </div>
          <div className="h-[30px] shrink-0 bg-[#c5c5c5] flex items-center text-[17.3px] font-bold text-black">
            <svg width="14" height="14" className="ml-[9px] mr-[8px] shrink-0"><circle cx="7" cy="7" r="5" fill="#9e9e9e" stroke="#777" strokeWidth="2" /></svg>
            <span className="whitespace-pre">Saldo: 100.00 USD  Egenkapital: 100.00  Fri margin: 100.00</span>
            <span className="ml-auto pr-[6px]">0.00</span>
          </div>
          <div className="h-[50px] shrink-0" />
          <div className="flex-1 flex bg-[#f0f0f0] pl-[4px]">
            <div className="w-[85px] h-[30px] shrink-0 bg-white border-r border-black flex items-start justify-center text-[16.5px] leading-[26px] text-[#111]">Handel</div>
            <div className="flex-1 flex border-t border-black">
              <TT c="w-[112px]">Udsattelse</TT>
              <TT c="w-[136px]">Kontohistorie</TT>
              <TT c="w-[118px]"><span>Nyheder</span><span className="text-[12px] font-bold text-[#e0101a] leading-none mt-[9px] ml-[1px]">99</span></TT>
              <TT c="w-[104px]">Advarsler</TT>
              <TT c="w-[114px]"><span>Mailboks</span><span className="text-[12px] font-bold text-[#e0101a] leading-none mt-[9px] ml-[2px]">9</span></TT>
              <TT c="w-[141px]">Markedsplads</TT>
              <TT c="w-[90px]">Artikler</TT>
              <TT c="w-[94px]">Bibliotek</TT>
              <TT c="w-[93px]">Experts</TT>
              <TT c="w-[90px]">Journal</TT>
            </div>
          </div>
        </div>
        <div className="flex-1" />
      </div>
    </div>
  );
}
